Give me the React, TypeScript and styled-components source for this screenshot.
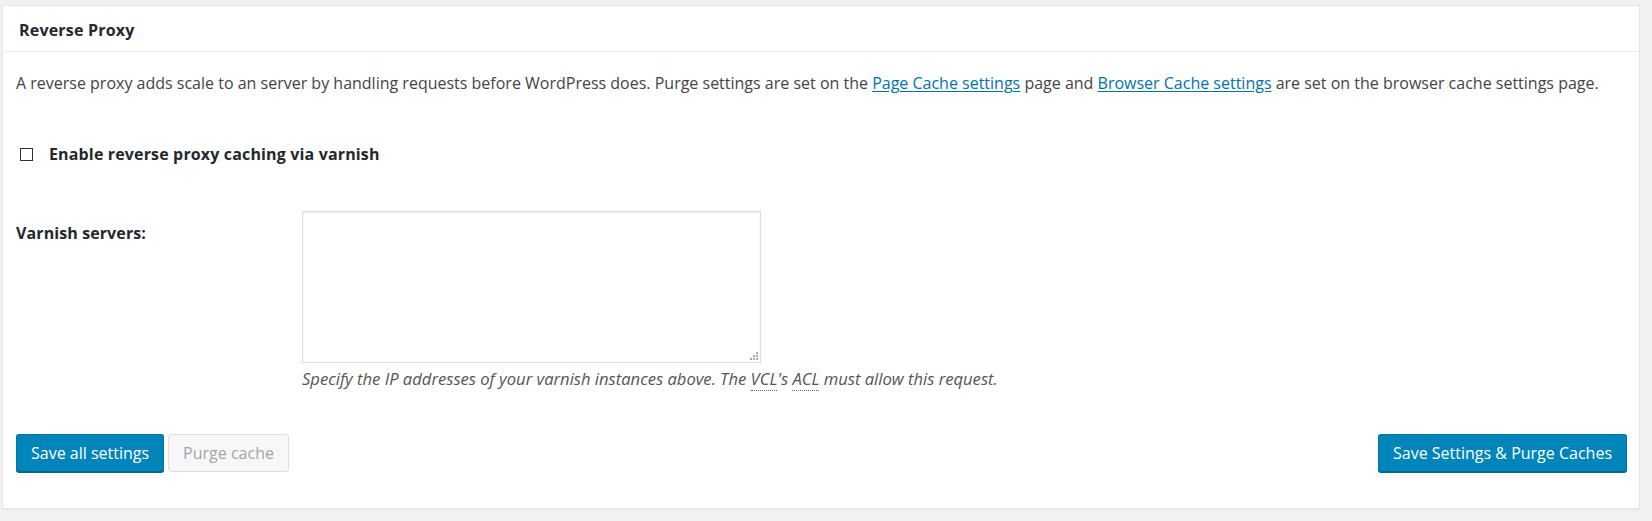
import React from "react";
import styled, { createGlobalStyle } from "styled-components";

const GlobalStyle = createGlobalStyle`
  html, body { margin: 0; padding: 0; background: #f1f1f1; }
  body {
    font-family: "Open Sans", "Noto Sans", sans-serif;
    font-size: 16px;
    color: #444;
    -webkit-font-smoothing: antialiased;
  }
  #root { padding: 5px 12px 12px 2px; }
`;

const Postbox = styled.section`
  background: #fff;
  border: 1px solid #e5e5e5;
  box-shadow: 0 1px 1px rgba(0, 0, 0, 0.04);
`;

const Header = styled.h3`
  margin: 0;
  padding: 12px 16px 9px;
  font-size: 16px;
  line-height: 24px;
  font-weight: 700;
  letter-spacing: 0.2px;
  color: #23282d;
  border-bottom: 1px solid #eee;
`;

const Inside = styled.div`
  padding: 19px 12px 36px 13px;
`;

const Intro = styled.p`
  margin: 0;
  line-height: 24px;
  color: #444;
  white-space: nowrap;
`;

const Link = styled.a`
  color: #0073aa;
  text-decoration: underline;
  text-underline-offset: 2px;
`;

const CheckRow = styled.label`
  display: flex;
  align-items: center;
  margin-top: 47px;
  padding-left: 4px;
  line-height: 24px;
  font-weight: 700;
  letter-spacing: 0.15px;
  color: #23282d;
  gap: 16px;
`;

const Box = styled.span`
  display: inline-block;
  width: 11px;
  height: 11px;
  border: 1px solid #333;
  margin-top: 1px;
`;

const FieldRow = styled.div`
  display: grid;
  grid-template-columns: 286px 1fr;
  margin-top: 45px;
`;

const FieldLabel = styled.div`
  padding-top: 10px;
  line-height: 24px;
  font-weight: 700;
  letter-spacing: 0.1px;
  color: #23282d;
`;

const FieldBody = styled.div`
  display: flex;
  flex-direction: column;
  gap: 4px;
`;

const AreaWrap = styled.div`
  position: relative;
  width: 459px;
  height: 152px;
`;

const Area = styled.textarea`
  box-sizing: border-box;
  width: 100%;
  height: 100%;
  margin: 0;
  border: 1px solid #ddd;
  box-shadow: inset 0 1px 2px rgba(0, 0, 0, 0.07);
  resize: none;
  outline: none;
  font-family: inherit;
  font-size: 14px;
  display: block;
`;

const Grip = styled.svg`
  position: absolute;
  right: 3px;
  bottom: 3px;
  width: 8px;
  height: 8px;
`;

const Description = styled.p`
  margin: 0;
  font-style: italic;
  font-size: 16.6px;
  line-height: 24px;
  color: #555;
  white-space: nowrap;
`;

const Abbr = styled.abbr`
  text-decoration: none;
  border-bottom: 1px dotted #666;
`;

const Actions = styled.div`
  display: flex;
  justify-content: space-between;
  align-items: center;
  margin-top: 43px;
`;

const ButtonGroup = styled.div`
  display: flex;
  gap: 4px;
`;

const Button = styled.button<{ $primary?: boolean }>`
  box-sizing: border-box;
  height: 38px;
  padding: 0 14px;
  border-radius: 3px;
  font-family: inherit;
  font-size: 16px;
  line-height: 36px;
  white-space: nowrap;
  cursor: pointer;
  background: ${(p) => (p.$primary ? "#0085ba" : "#f7f7f7")};
  color: ${(p) => (p.$primary ? "#fff" : "#a0a5aa")};
  border: 1px solid ${(p) => (p.$primary ? "#0073aa" : "#ddd")};
  border-bottom-color: ${(p) => (p.$primary ? "#006799" : "#ddd")};
  box-shadow: ${(p) => (p.$primary ? "0 1px 0 #006799" : "none")};
  &:disabled { cursor: default; }
`;

export default function App() {
  return (
    <>
      <GlobalStyle />
      <Postbox>
        <Header>Reverse Proxy</Header>
        <Inside>
          <Intro>
            A reverse proxy adds scale to an server by handling requests before WordPress does. Purge settings are set on the{" "}
            <Link href="#">Page Cache settings</Link> page and <Link href="#">Browser Cache settings</Link> are set on the browser cache settings page.
          </Intro>
          <CheckRow>
            <Box />
            Enable reverse proxy caching via varnish
          </CheckRow>
          <FieldRow>
            <FieldLabel>Varnish servers:</FieldLabel>
            <FieldBody>
              <AreaWrap>
                <Area />
                <Grip viewBox="0 0 8 8">
                  <g fill="#a8a8a8">
                    <rect x="6" y="0" width="2" height="2" />
                    <rect x="3" y="3" width="2" height="2" />
                    <rect x="6" y="3" width="2" height="2" />
                    <rect x="0" y="6" width="2" height="2" />
                    <rect x="3" y="6" width="2" height="2" />
                    <rect x="6" y="6" width="2" height="2" />
                  </g>
                </Grip>
              </AreaWrap>
              <Description>
                Specify the IP addresses of your varnish instances above. The <Abbr title="Varnish Configuration Language">VCL</Abbr>'s <Abbr title="Access Control List">ACL</Abbr> must allow this request.
              </Description>
            </FieldBody>
          </FieldRow>
          <Actions>
            <ButtonGroup>
              <Button $primary>Save all settings</Button>
              <Button disabled>Purge cache</Button>
            </ButtonGroup>
            <Button $primary>Save Settings &amp; Purge Caches</Button>
          </Actions>
        </Inside>
      </Postbox>
    </>
  );
}
